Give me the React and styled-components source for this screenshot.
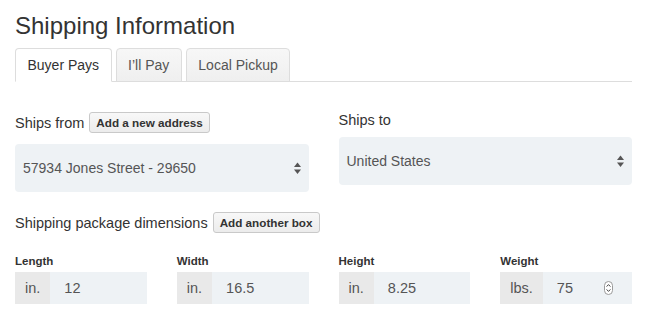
import React from 'react';
import styled, { createGlobalStyle } from 'styled-components';

const GlobalStyle = createGlobalStyle`
  body {
    margin: 0;
    background: #fff;
    color: #333;
    font-family: 'Liberation Sans', Arial, sans-serif;
  }
`;

// Page
const Page = styled.div`
  width: 617px;
  padding: 11px 0 0 15px;
`;

const Title = styled.h1`
  margin: 0 0 7px;
  font-size: 24px;
  font-weight: normal;
  line-height: 30px;
  color: #333;
`;

// Tabs
const TabList = styled.ul`
  display: flex;
  gap: 4px;
  margin: 0;
  padding: 0;
  list-style: none;
  height: 33px;
  border-bottom: 1px solid #ddd;
`;

const Tab = styled.li`
  box-sizing: border-box;
  height: 34px;
  margin-bottom: -1px;
  padding: 0 11.5px;
  border: 1px solid #ddd;
  border-radius: 4px 4px 0 0;
  font-size: 14px;
  line-height: 32px;
  color: ${(p) => (p.active ? '#333' : '#555')};
  background: ${(p) =>
    p.active ? '#fff' : 'linear-gradient(#f7f7f7, #efefef)'};
  border-bottom-color: ${(p) => (p.active ? '#fff' : '#ddd')};
`;

// Address row
const AddressGrid = styled.div`
  display: grid;
  grid-template-columns: 1fr 1fr;
  column-gap: 30px;
  align-items: start;
  margin-top: 30px;
`;

const LabelRow = styled.div`
  display: flex;
  align-items: center;
  gap: 5px;
  height: ${(p) => (p.withButton ? '21px' : '16px')};
  margin-bottom: ${(p) => (p.withButton ? '11px' : '9px')};
  font-size: 14.5px;
  color: #333;
`;

const SmallButton = styled.button`
  box-sizing: border-box;
  height: 21px;
  padding: 0 6px;
  border: 1px solid #c9c9c9;
  border-radius: 3px;
  background: linear-gradient(#f8f8f8, #ececec);
  font-family: inherit;
  font-size: 11.7px;
  font-weight: bold;
  color: #333;
`;

const SelectBox = styled.div`
  display: flex;
  align-items: center;
  justify-content: space-between;
  height: 48px;
  padding: 0 8px;
  border-radius: 4px;
  background: #eef2f5;
  font-size: 14px;
  color: #555;
`;

// Dimensions
const DimsSection = styled.div`
  margin-top: 20px;
`;

const DimsGrid = styled.div`
  display: grid;
  grid-template-columns: repeat(4, 1fr);
  column-gap: 30px;
  margin-top: 21px;
`;

const FieldLabel = styled.div`
  font-size: 11.5px;
  font-weight: bold;
  line-height: 14px;
  margin-bottom: 4px;
  color: #333;
`;

const InputGroup = styled.div`
  display: flex;
  height: 32px;
  font-size: 14.5px;
  color: #555;
`;

const Addon = styled.span`
  display: flex;
  align-items: center;
  padding: 0 10px;
  background: #e9e9e9;
`;

const Field = styled.span`
  flex: 1;
  display: flex;
  align-items: center;
  justify-content: space-between;
  padding: 0 19px 0 14px;
  background: #eef2f5;
`;

const SelectArrows = () => (
  <svg width="7" height="13" viewBox="0 0 7 13">
    <path d="M0 5 L3.5 0.5 L7 5 Z" fill="#555" />
    <path d="M0 7.5 L3.5 12 L7 7.5 Z" fill="#555" />
  </svg>
);

const Spinner = () => (
  <svg width="9" height="14" viewBox="0 0 9 14">
    <rect x="0.5" y="0.5" width="8" height="13" rx="4" fill="#fff" stroke="#9a9a9a" />
    <polyline points="2.6,5.6 4.5,3.6 6.4,5.6" fill="none" stroke="#444" strokeWidth="1" />
    <polyline points="2.6,8.4 4.5,10.4 6.4,8.4" fill="none" stroke="#444" strokeWidth="1" />
  </svg>
);

const dims = [
  { label: 'Length', unit: 'in.', value: '12' },
  { label: 'Width', unit: 'in.', value: '16.5' },
  { label: 'Height', unit: 'in.', value: '8.25' },
  { label: 'Weight', unit: 'lbs.', value: '75', spinner: true },
];

const App = () => {
  return (
    <Page>
      <GlobalStyle />
      <Title>Shipping Information</Title>
      <TabList>
        <Tab active>Buyer Pays</Tab>
        <Tab>I’ll Pay</Tab>
        <Tab>Local Pickup</Tab>
      </TabList>

      <AddressGrid>
        <div>
          <LabelRow withButton>
            Ships from
            <SmallButton>Add a new address</SmallButton>
          </LabelRow>
          <SelectBox>
            57934 Jones Street - 29650
            <SelectArrows />
          </SelectBox>
        </div>
        <div>
          <LabelRow>Ships to</LabelRow>
          <SelectBox>
            United States
            <SelectArrows />
          </SelectBox>
        </div>
      </AddressGrid>

      <DimsSection>
        <LabelRow withButton>
          Shipping package dimensions
          <SmallButton>Add another box</SmallButton>
        </LabelRow>
        <DimsGrid>
          {dims.map((d) => (
            <div key={d.label}>
              <FieldLabel>{d.label}</FieldLabel>
              <InputGroup>
                <Addon>{d.unit}</Addon>
                <Field>
                  {d.value}
                  {d.spinner && <Spinner />}
                </Field>
              </InputGroup>
            </div>
          ))}
        </DimsGrid>
      </DimsSection>
    </Page>
  );
};

export default App;
